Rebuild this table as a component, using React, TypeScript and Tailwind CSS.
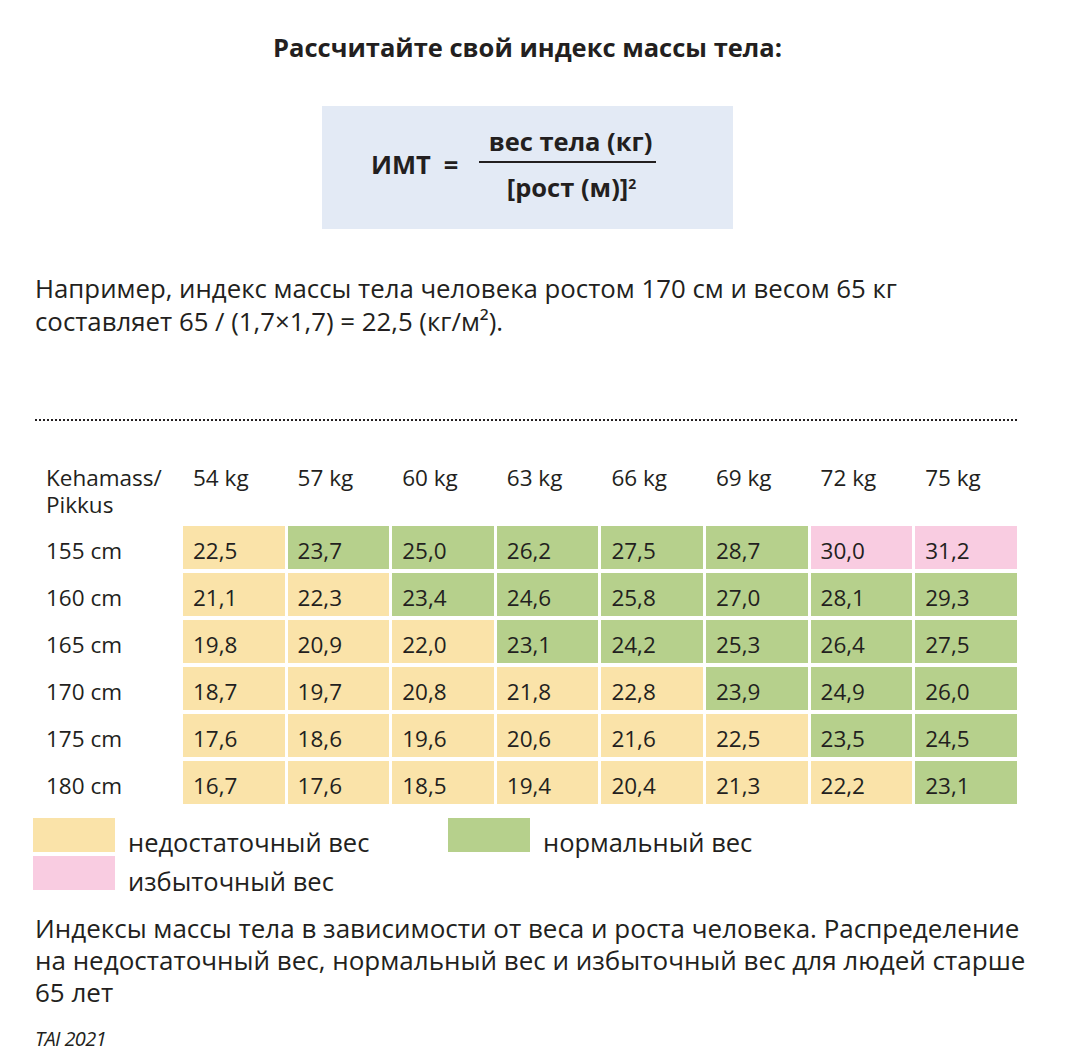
const Y = 'bg-[#fae3a9]'
const G = 'bg-[#b6d08c]'
const P = 'bg-[#f9cce1]'

const weights = ['54 kg', '57 kg', '60 kg', '63 kg', '66 kg', '69 kg', '72 kg', '75 kg']

const rows: { h: string; v: string[]; c: string[] }[] = [
  { h: '155 cm', v: ['22,5', '23,7', '25,0', '26,2', '27,5', '28,7', '30,0', '31,2'], c: [Y, G, G, G, G, G, P, P] },
  { h: '160 cm', v: ['21,1', '22,3', '23,4', '24,6', '25,8', '27,0', '28,1', '29,3'], c: [Y, Y, G, G, G, G, G, G] },
  { h: '165 cm', v: ['19,8', '20,9', '22,0', '23,1', '24,2', '25,3', '26,4', '27,5'], c: [Y, Y, Y, G, G, G, G, G] },
  { h: '170 cm', v: ['18,7', '19,7', '20,8', '21,8', '22,8', '23,9', '24,9', '26,0'], c: [Y, Y, Y, Y, Y, G, G, G] },
  { h: '175 cm', v: ['17,6', '18,6', '19,6', '20,6', '21,6', '22,5', '23,5', '24,5'], c: [Y, Y, Y, Y, Y, Y, G, G] },
  { h: '180 cm', v: ['16,7', '17,6', '18,5', '19,4', '20,4', '21,3', '22,2', '23,1'], c: [Y, Y, Y, Y, Y, Y, Y, G] },
]

export default function App() {
  return (
    <div className="w-[1072px] min-h-[1062px] bg-white text-[#231f20] font-['Open_Sans',sans-serif]">
      <div className="ml-[35px] w-[985px] pt-[32px]">
        <h1 className="text-center text-[25.5px] leading-[30px] font-bold">
          Рассчитайте свой индекс массы тела:
        </h1>

        {/* formula */}
        <div className="flex justify-center mt-[44px]">
          <div className="w-[411px] h-[123px] bg-[#e3eaf5] flex items-start pt-[20px] pl-[49px] font-bold text-[25.5px]">
            <div className="w-[108px] flex mt-[23px] leading-[30px]">
              <span>ИМТ</span>
              <span className="ml-[13px]">=</span>
            </div>
            <div className="flex flex-col items-center w-[177px]">
              <span className="leading-[30px] pl-[6px]">вес тела (кг)</span>
              <div className="w-full h-[1.5px] bg-[#231f20] mt-[5px]" />
              <span className="leading-[30px] mt-[9px] pl-[8px]">
                [рост (м)]<span className="text-[14px] align-top relative -top-[3px]">2</span>
              </span>
            </div>
          </div>
        </div>

        <p className="mt-[43px] text-[25.8px] leading-[33px]">
          Например, индекс массы тела человека ростом 170 см и весом 65 кг
          <br />
          составляет 65 / (1,7×1,7) = 22,5 (кг/м²).
        </p>

        <div className="mt-[81px] w-[982px] border-b-2 border-dotted border-[#231f20]" />

        {/* table */}
        <div className="mt-[43px] ml-[11px] grid grid-cols-[134px_repeat(8,101.6px)] gap-x-[3px] gap-y-[4px] text-[22.5px]">
          <div className="leading-[27px] h-[58px]">
            <div>Kehamass/</div>
            <div>Pikkus</div>
          </div>
          {weights.map((w) => (
            <div key={w} className="leading-[27px] pl-[10px]">
              {w}
            </div>
          ))}
          {rows.map((r) => (
            <>
              <div key={r.h} className="h-[43px] flex items-center pt-[6px]">
                {r.h}
              </div>
              {r.v.map((v, i) => (
                <div key={r.h + i} className={`h-[43px] flex items-center pt-[6px] pl-[10px] ${r.c[i]}`}>
                  {v}
                </div>
              ))}
            </>
          ))}
        </div>

        {/* legend */}
        <div className="mt-[14px] -ml-[2px] flex text-[25.5px]">
          <div className="flex flex-col gap-[4px]">
            <div className={`w-[82px] h-[34px] ${Y}`} />
            <div className={`w-[82px] h-[34px] ${P}`} />
          </div>
          <div className="ml-[13px] w-[320px] flex flex-col pt-[5px]">
            <span className="leading-[39px]">недостаточный вес</span>
            <span className="leading-[39px]">избыточный вес</span>
          </div>
          <div className={`w-[82px] h-[34px] ${G}`} />
          <div className="ml-[13px] pt-[5px]">
            <span className="leading-[39px]">нормальный вес</span>
          </div>
        </div>

        <p className="mt-[11px] text-[26px] leading-[32px] whitespace-nowrap">
          Индексы массы тела в зависимости от веса и роста человека. Распределение
          <br />
          на недостаточный вес, нормальный вес и избыточный вес для людей старше
          <br />
          65 лет
        </p>

        <p className="mt-[18px] text-[20px] italic leading-[26px] tracking-[-0.6px]">TAI 2021</p>
      </div>
    </div>
  )
}
